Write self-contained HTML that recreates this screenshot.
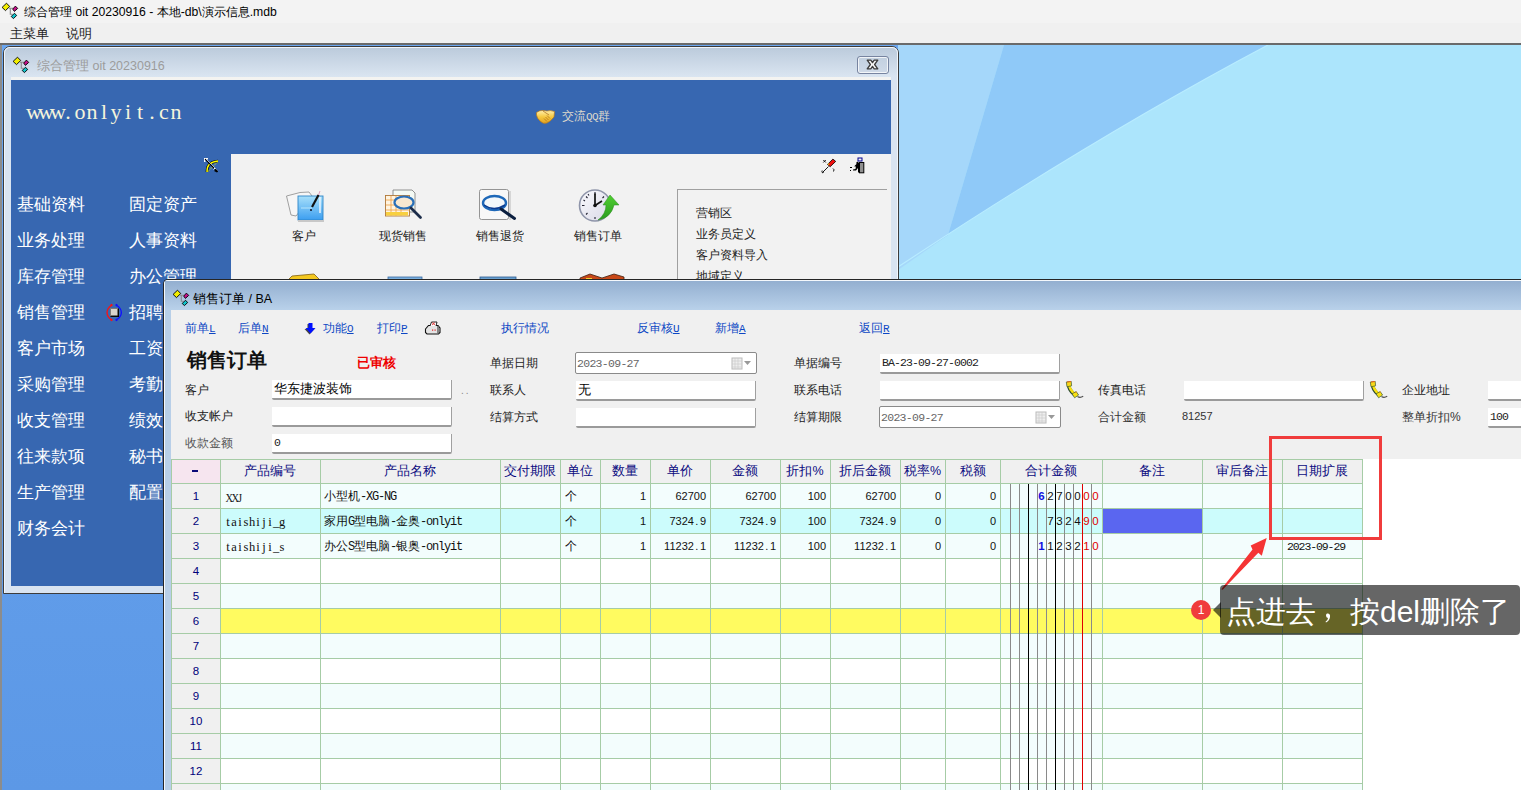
<!DOCTYPE html>
<html><head><meta charset="utf-8">
<style>
*{box-sizing:border-box;margin:0;padding:0}
html,body{width:1521px;height:790px;overflow:hidden;background:#fff}
body{position:relative;font-family:"Liberation Sans",sans-serif;font-size:12px;color:#000}
.a{position:absolute}
.t{position:absolute;white-space:nowrap;line-height:1}
/* desktop */
#desk{left:0;top:45px;width:1521px;height:745px;background:linear-gradient(180deg,#6aa6f0 0%,#5c98e6 100%)}
#deskR{left:898px;top:45px;width:623px;height:235px;background:#ace5fc;overflow:hidden}
/* window 1 */
#w1{left:3px;top:46px;width:896px;height:548px;border:1px solid #3c3c3c;border-radius:7px 7px 0 0;background:#d9e4f1}
#w1hi{left:4px;top:47px;width:894px;height:546px;border:1px solid #f2f6fb;border-bottom:0;border-radius:6px 6px 0 0}
#w1title{background:linear-gradient(180deg,#bccbdc,#dae5f1);border-radius:5px 5px 0 0}
#w1blue{left:11px;top:80px;width:880px;height:74px;background:#3767b1}
#w1blueL{left:11px;top:154px;width:220px;height:432px;background:#3767b1}
#w1content{left:231px;top:154px;width:660px;height:126px;background:#f2f2f2}
#w1strip{left:11px;top:77px;width:880px;height:3px;background:#f3f3f1}
/* window 2 */
#w2{left:163px;top:279px;width:1400px;height:520px;border:1px solid #262626;border-right:0;border-bottom:0;border-radius:5px 0 0 0;background:#b8cfe8}
#w2hi{left:164px;top:280px;width:1400px;height:520px;border:1px solid #f4f8fc;border-right:0;border-bottom:0;border-radius:4px 0 0 0}
#w2title{left:165px;top:281px;width:1356px;height:29px;background:linear-gradient(180deg,#93afd0,#b9d1ea)}
#w2content{left:171px;top:310px;width:1350px;height:149px;background:#f0f0f0}
#w2white{left:171px;top:459px;width:1350px;height:331px;background:#fff}
</style></head><body>
<!-- title bar -->
<div class="a" style="left:0;top:0;width:1521px;height:23px;background:#f3f3f3"></div>
<div class="a" style="left:0;top:23px;width:1521px;height:20px;background:#f0f0f0"></div>
<div class="a" style="left:0;top:43px;width:1521px;height:2px;background:#6a6a6a"></div>
<svg class="a" style="left:0px;top:0px" width="20" height="20" viewBox="0 0 20 20">
 <path d="M9 8.3 H13 M10.3 8.3 V14.3 H12.5" stroke="#8a8a8a" stroke-width="1.1" fill="none"/>
 <path d="M2.1 7.4 L6.5 3.2 L9.7 6.5 L5.5 10.6 Z" fill="#f2ee00" stroke="#000" stroke-width="0.9"/>
 <path d="M12.7 9.1 L15.4 6.1 L17.7 8.4 L14.4 11.4 Z" fill="#c8108a" stroke="#000" stroke-width="0.9"/>
 <path d="M11.2 16.5 L14.4 13.3 L16.7 15.4 L13.5 18.6 Z" fill="#10c4cc" stroke="#000" stroke-width="0.9"/>
</svg>
<div class="t" style="left:24px;top:6px;font-size:12.2px">综合管理 oit 20230916 - 本地-db\演示信息.mdb</div>
<div class="t" style="left:10px;top:27px;font-size:13px;color:#222">主菜单</div>
<div class="t" style="left:66px;top:27px;font-size:13px;color:#222">说明</div>

<div id="desk" class="a"></div>
<div id="deskR" class="a">
  <svg width="623" height="235" style="position:absolute;left:0;top:0">
    <polygon points="0,0 106,0 50,190 0,225" fill="#a5d7fa"/>
    <path d="M106,0 L370,0 Q200,90 0,222 L50,190 Z" fill="#8fc9f8"/>
    <path d="M370,0 Q200,90 0,222" stroke="#b8ecff" stroke-width="1.2" fill="none"/>
  </svg>
</div>

<div class="a" style="left:0;top:45px;width:2px;height:745px;background:#8c8c8c"></div>
<div id="w1" class="a"></div>
<div id="w1hi" class="a"></div>
<div id="w1title" class="a" style="left:5px;top:48px;width:892px;height:29px"></div>
<div id="w1strip" class="a"></div>
<div id="w1blue" class="a"></div>
<div id="w1blueL" class="a"></div>
<div id="w1content" class="a"></div>


<!-- W1 details -->
<svg class="a" style="left:11px;top:54px" width="20" height="20" viewBox="0 0 20 20">
 <path d="M9 8.3 H13 M10.3 8.3 V14.3 H12.5" stroke="#8a8a8a" stroke-width="1.1" fill="none"/>
 <path d="M2.1 7.4 L6.5 3.2 L9.7 6.5 L5.5 10.6 Z" fill="#f2ee00" stroke="#000" stroke-width="0.9"/>
 <path d="M12.7 9.1 L15.4 6.1 L17.7 8.4 L14.4 11.4 Z" fill="#c8108a" stroke="#000" stroke-width="0.9"/>
 <path d="M11.2 16.5 L14.4 13.3 L16.7 15.4 L13.5 18.6 Z" fill="#10c4cc" stroke="#000" stroke-width="0.9"/>
</svg>
<div class="t" style="left:37px;top:60px;font-size:12.5px;color:#9c9c9c">综合管理 oit 20230916</div>
<div class="a" style="left:857px;top:56px;width:32px;height:18px;border:1px solid #7784a0;border-radius:3px;background:linear-gradient(#c2d0e0,#cfdae8);box-shadow:inset 0 0 0 1px rgba(255,255,255,0.75)"></div>
<svg class="a" style="left:866px;top:59px" width="13" height="11" viewBox="0 0 13 11"><path d="M1.2 1.2 L4.8 1.2 L6.5 3.6 L8.2 1.2 L11.8 1.2 L8.6 5.5 L11.8 9.8 L8.2 9.8 L6.5 7.4 L4.8 9.8 L1.2 9.8 L4.4 5.5 Z" fill="#f6f6f6" stroke="#3c3c3c" stroke-width="1.3" stroke-linejoin="round"/></svg>
<div class="t" style="left:26px;top:101px;font-family:'Liberation Serif',serif;font-size:22px;color:#f4f4dc"><span style="display:inline-block;width:12px;text-align:center">w</span><span style="display:inline-block;width:12px;text-align:center">w</span><span style="display:inline-block;width:12px;text-align:center">w</span><span style="display:inline-block;width:12px;text-align:center">.</span><span style="display:inline-block;width:12px;text-align:center">o</span><span style="display:inline-block;width:12px;text-align:center">n</span><span style="display:inline-block;width:12px;text-align:center">l</span><span style="display:inline-block;width:12px;text-align:center">y</span><span style="display:inline-block;width:12px;text-align:center">i</span><span style="display:inline-block;width:12px;text-align:center">t</span><span style="display:inline-block;width:12px;text-align:center">.</span><span style="display:inline-block;width:12px;text-align:center">c</span><span style="display:inline-block;width:12px;text-align:center">n</span></div>
<svg class="a" style="left:536px;top:109px" width="20" height="16" viewBox="0 0 20 16">
 <defs><linearGradient id="hs" x1="0" y1="0" x2="0" y2="1"><stop offset="0" stop-color="#fff0b0"/><stop offset="0.5" stop-color="#f6c840"/><stop offset="1" stop-color="#e0a020"/></linearGradient></defs>
 <path d="M0.5 3.5 Q4 1 7 1.5 L11 2 Q14 1 18.5 2.5 L18 8 Q15 12 11 14 Q7 15.5 4 12 Q1 9.5 0.5 6 Z" fill="url(#hs)" stroke="#b87818" stroke-width="0.7"/>
 <path d="M7 2 Q10 4 13 6 M9.5 8 L12.5 11 M8 9.5 L11 12.5 M11 6.5 L14 9.5" stroke="#a86818" stroke-width="0.7" fill="none"/>
</svg>
<div class="t" style="left:562px;top:110px;font-size:12px;color:#dcd8cc">交流<span style="font-family:'Liberation Mono',monospace;font-size:11px;letter-spacing:-0.6px">QQ</span>群</div>
<svg class="a" style="left:203px;top:157px" width="16" height="16" viewBox="0 0 16 16">
 <path d="M4 15 Q3.5 5 15 4" stroke="#000" stroke-width="2.6" fill="none"/>
 <path d="M4 15 Q3.5 5 15 4" stroke="#ffff00" stroke-width="1.4" fill="none"/>
 <path d="M4.5 15 L15 4.5" stroke="#ffff00" stroke-width="0.9" stroke-dasharray="1 1"/>
 <path d="M1 1 H5 V2.5 H2.5 V5 H1 Z" fill="#fff"/>
 <path d="M2 2 L14.5 14.5" stroke="#000" stroke-width="1.1"/>
 <path d="M2.5 1.5 L14.5 13.5" stroke="#fff" stroke-width="0.6"/>
 <path d="M11 14 L13 12 L15 14.5 L14 15.5 Z" fill="#000"/>
 <path d="M10.5 12.5 L12 11" stroke="#fff" stroke-width="1"/>
</svg>
<div class="t" style="left:17px;top:196px;font-size:16.5px;color:#fff">基础资料</div>
<div class="t" style="left:17px;top:232px;font-size:16.5px;color:#fff">业务处理</div>
<div class="t" style="left:17px;top:268px;font-size:16.5px;color:#fff">库存管理</div>
<div class="t" style="left:17px;top:304px;font-size:16.5px;color:#fff">销售管理</div>
<div class="t" style="left:17px;top:340px;font-size:16.5px;color:#fff">客户市场</div>
<div class="t" style="left:17px;top:376px;font-size:16.5px;color:#fff">采购管理</div>
<div class="t" style="left:17px;top:412px;font-size:16.5px;color:#fff">收支管理</div>
<div class="t" style="left:17px;top:448px;font-size:16.5px;color:#fff">往来款项</div>
<div class="t" style="left:17px;top:484px;font-size:16.5px;color:#fff">生产管理</div>
<div class="t" style="left:17px;top:520px;font-size:16.5px;color:#fff">财务会计</div>
<div class="t" style="left:129px;top:196px;font-size:16.5px;color:#fff">固定资产</div>
<div class="t" style="left:129px;top:232px;font-size:16.5px;color:#fff">人事资料</div>
<div class="t" style="left:129px;top:268px;font-size:16.5px;color:#fff">办公管理</div>
<div class="t" style="left:129px;top:304px;font-size:16.5px;color:#fff">招聘</div>
<div class="t" style="left:129px;top:340px;font-size:16.5px;color:#fff">工资</div>
<div class="t" style="left:129px;top:376px;font-size:16.5px;color:#fff">考勤</div>
<div class="t" style="left:129px;top:412px;font-size:16.5px;color:#fff">绩效</div>
<div class="t" style="left:129px;top:448px;font-size:16.5px;color:#fff">秘书</div>
<div class="t" style="left:129px;top:484px;font-size:16.5px;color:#fff">配置</div>

<svg class="a" style="left:105px;top:303px" width="19" height="19" viewBox="0 0 19 19">
 <path d="M6.5 2.2 Q2.2 5 2 9.5 Q2.2 14 6.5 16.8" stroke="#ff1010" stroke-width="1.3" fill="none"/>
 <path d="M11.5 2.2 Q16.2 5 16.4 9.5 Q16.2 14 11.5 16.8" stroke="#1010ff" stroke-width="1.3" fill="none"/>
 <path d="M5 2 L6.5 0.8 L8 2 L6.5 3.4 Z M5 17 L6.5 15.6 L8 17 L6.5 18.2 Z" fill="#ff1010"/>
 <path d="M10 2 L11.5 0.8 L13 2 L11.5 3.4 Z M10 17 L11.5 15.6 L13 17 L11.5 18.2 Z" fill="#1010ff"/>
 <rect x="5.5" y="5.5" width="8.5" height="8.5" fill="#000"/>
 <rect x="5" y="5" width="8" height="8" fill="#7a7a7a"/>
 <rect x="6" y="6" width="7" height="7" fill="#d8d4cc"/>
 <path d="M6 13 H13 V6" stroke="#111" stroke-width="1" fill="none"/>
</svg>
<!-- W1 content icons -->
<svg class="a" style="left:230px;top:150px" width="420" height="140" viewBox="0 0 420 140">
 <defs>
  <linearGradient id="gb" x1="0" y1="0" x2="0" y2="1"><stop offset="0" stop-color="#a8e0fa"/><stop offset="1" stop-color="#3c9ef0"/></linearGradient>
  <linearGradient id="gc" x1="0" y1="0" x2="1" y2="1"><stop offset="0" stop-color="#fafafe"/><stop offset="1" stop-color="#d8d8e6"/></linearGradient>
  <linearGradient id="gg" x1="0" y1="0" x2="0" y2="1"><stop offset="0" stop-color="#50d030"/><stop offset="1" stop-color="#2a9a20"/></linearGradient>
 </defs>
 <!-- customer -->
 <path d="M56.5 46 L70 42.5 L79 42 L82 46 L66 66 L61 65 Z" fill="#f6f6f6" stroke="#8a8a8a" stroke-width="0.8"/>
 <rect x="68" y="46" width="25" height="24" fill="url(#gb)" stroke="#2f86c8" stroke-width="0.9"/>
 <path d="M71 58 H82" stroke="#c8f0ff" stroke-width="0.8"/>
 <path d="M90 47 V63" stroke="#e8f4ff" stroke-width="1.5"/>
 <rect x="68" y="70" width="26" height="2" fill="#c8c8c8"/>
 <path d="M82 57 L88.5 45" stroke="#111" stroke-width="2.2"/>
 <path d="M88.5 45 L90 41" stroke="#e0a0c0" stroke-width="1"/>
 <circle cx="81" cy="60" r="1" fill="#112"/>
 <!-- cash sale -->
 <path d="M163 40 H182 L185 43 V62 H163 Z" fill="#f4faf4" stroke="#777" stroke-width="0.8"/>
 <rect x="155.5" y="45.5" width="24" height="20.5" fill="#fff4e0" stroke="#b07838" stroke-width="0.9"/>
 <path d="M156 50 H179 M156 55 H179 M156 60 H179 M161 46 V66 M166 46 V66 M171 46 V66" stroke="#f0a040" stroke-width="0.8"/>
 <rect x="156" y="62" width="22" height="3.5" fill="#f8d040"/>
 <ellipse cx="174" cy="52.5" rx="9.5" ry="6" fill="#f8e8d0" stroke="#2a70b8" stroke-width="2.2"/>
 <path d="M181 58 L190.5 67.5" stroke="#1c2c4a" stroke-width="2.8" stroke-linecap="round"/>
 <!-- return -->
 <rect x="249.5" y="39.5" width="29" height="30" rx="2" fill="#f8f8f8" stroke="#8a8a8a" stroke-width="0.9"/>
 <rect x="279" y="41" width="2" height="29" fill="#d6d6d6"/>
 <ellipse cx="264.5" cy="53" rx="11.5" ry="7" fill="#f4f8fa" stroke="#1e68b8" stroke-width="2.4"/>
 <path d="M254 55 Q264 62 275 55" stroke="#0c3c90" stroke-width="1.5" fill="none"/>
 <path d="M271 59 L284.5 68.5" stroke="#0c2040" stroke-width="3" stroke-linecap="round"/>
 <!-- order clock -->
 <circle cx="365" cy="55.5" r="15.5" fill="url(#gc)" stroke="#8f95aa" stroke-width="1.6"/>
 <path d="M365 42 V44.5 M365 67 V69 M352 55.5 H354.5 M356 46.5 L357.5 48 M374 46.5 L372.5 48 M356 64.5 L357.5 63 M358 44 L359 45.5 M353.5 50 L355 51" stroke="#223" stroke-width="1.1"/>
 <path d="M365 55.5 V43.5 M365 55.5 L372 51" stroke="#111" stroke-width="1.7"/>
 <circle cx="365" cy="55.5" r="1.8" fill="#111"/>
 <path d="M373 55 H376 Q376 64 368 70 Q381 68 384 55 H389 L380 45 Z" fill="url(#gg)" stroke="#2a8a20" stroke-width="0.5"/>
 <!-- second row partial -->
 <path d="M56 132 L62 126 L84 124 L90 130 L90 133 L56 133 Z" fill="#f4c820" stroke="#806010" stroke-width="0.8"/>
 <rect x="158" y="127" width="34" height="6" fill="#7ab0e0" stroke="#3a6aa0" stroke-width="0.8"/>
 <rect x="250" y="127" width="36" height="6" fill="#6aa0d0" stroke="#2a5a90" stroke-width="0.8"/>
 <path d="M350 128 L360 124 L372 128 L384 124 L394 127 L394 133 L350 133 Z" fill="#c84818" stroke="#402010" stroke-width="0.8"/>
 <rect x="356" y="128" width="6" height="3" fill="#f0d030"/>
</svg>
<div class="t" style="left:292px;top:230px;font-size:12px;color:#222">客户</div>
<div class="t" style="left:379px;top:230px;font-size:12px;color:#222">现货销售</div>
<div class="t" style="left:476px;top:230px;font-size:12px;color:#222">销售退货</div>
<div class="t" style="left:574px;top:230px;font-size:12px;color:#222">销售订单</div>
<div class="a" style="left:677px;top:189px;width:210px;height:100px;border-left:1px solid #a0a0a0;border-top:1px solid #a0a0a0"></div>
<div class="t" style="left:696px;top:207px;font-size:12px;color:#222">营销区</div>
<div class="t" style="left:696px;top:228px;font-size:12px;color:#222">业务员定义</div>
<div class="t" style="left:696px;top:249px;font-size:12px;color:#222">客户资料导入</div>
<div class="t" style="left:696px;top:270px;font-size:12px;color:#222">地域定义</div>
<svg class="a" style="left:815px;top:150px" width="55" height="30" viewBox="0 0 55 30">
 <path d="M8.3 10 L10.8 12.5 M10.8 10 L8.3 12.5" stroke="#000" stroke-width="0.9"/>
 <path d="M7.5 22.5 L13.5 16.5" stroke="#000" stroke-width="0.9"/>
 <path d="M7.2 20.5 Q6.5 22 7.5 22.8 L9 21.8" stroke="#000" stroke-width="0.9" fill="none"/>
 <path d="M18 18.5 Q19.8 19.5 18.5 21.5" stroke="#000" stroke-width="0.9" fill="none"/>
 <path d="M12.5 14.4 L17.9 9.1 L20.7 11.4 L15.2 16.7 Z" fill="#f01010" stroke="#000" stroke-width="0.8"/>
 <rect x="13" y="13.5" width="1.2" height="1.2" fill="#f0f000"/>
 <rect x="43" y="8" width="4" height="3" fill="none" stroke="#000090" stroke-width="1"/>
 <rect x="44.5" y="12.5" width="4.3" height="10.3" fill="#909090" stroke="#000" stroke-width="1"/>
 <path d="M42 13 L44 13 L44 22.5 L43 22.5 L43 18 L41 20.5 L38 20.5 L38 19.5 L40.5 19 L41 16 L40 17 L39.5 16 L42 13.5 Z" fill="#000"/>
 <circle cx="42.5" cy="13" r="1.2" fill="#000"/>
 <rect x="35" y="17" width="2" height="1" fill="#000"/><rect x="35" y="20" width="1" height="1" fill="#000"/>
</svg>

<div id="w2" class="a"></div>
<div id="w2hi" class="a"></div>
<div id="w2title" class="a"></div>
<div id="w2content" class="a"></div>
<div id="w2white" class="a"></div>

<svg class="a" style="left:171px;top:287px" width="20" height="20" viewBox="0 0 20 20">
 <path d="M9 8.3 H13 M10.3 8.3 V14.3 H12.5" stroke="#8a8a8a" stroke-width="1.1" fill="none"/>
 <path d="M2.1 7.4 L6.5 3.2 L9.7 6.5 L5.5 10.6 Z" fill="#f2ee00" stroke="#000" stroke-width="0.9"/>
 <path d="M12.7 9.1 L15.4 6.1 L17.7 8.4 L14.4 11.4 Z" fill="#c8108a" stroke="#000" stroke-width="0.9"/>
 <path d="M11.2 16.5 L14.4 13.3 L16.7 15.4 L13.5 18.6 Z" fill="#10c4cc" stroke="#000" stroke-width="0.9"/>
</svg>
<div class="t" style="left:193px;top:293px;font-size:12.5px;color:#000">销售订单 / BA</div>
<!-- toolbar -->
<div class="t" style="left:185px;top:322px;font-size:12px;color:#0d47c4">前单<u style="font-family:'Liberation Mono',monospace;font-size:11px">L</u></div>
<div class="t" style="left:238px;top:322px;font-size:12px;color:#0d47c4">后单<u style="font-family:'Liberation Mono',monospace;font-size:11px">N</u></div>
<svg class="a" style="left:304px;top:322px" width="12" height="13" viewBox="0 0 12 13"><path d="M3.5 2 H7.5 V7 H10.5 L5.5 12.5 L0.5 7 H3.5 Z" fill="#444"/><path d="M4.5 1 H8.5 V6 H11.5 L6.5 11.5 L1.5 6 H4.5 Z" fill="#0010ff"/></svg>
<div class="t" style="left:323px;top:322px;font-size:12px;color:#0d47c4">功能<u style="font-family:'Liberation Mono',monospace;font-size:11px">O</u></div>
<div class="t" style="left:377px;top:322px;font-size:12px;color:#0d47c4">打印<u style="font-family:'Liberation Mono',monospace;font-size:11px">P</u></div>
<svg class="a" style="left:424px;top:321px" width="17" height="14" viewBox="0 0 17 14">
 <path d="M1.5 8 L4.5 4.5 H14 L16 7 V11.5 L14.5 13 H3 L1.5 11.5 Z" fill="#e4e4e4" stroke="#111" stroke-width="1.1"/>
 <path d="M14 5 V12.5" stroke="#666" stroke-width="1.5"/>
 <path d="M6 5 L7.5 1 H13 L12 5" fill="#fff" stroke="#111" stroke-width="0.9"/>
 <path d="M8 1.5 L11 4 M11 1.5 L8 4" stroke="#e02020" stroke-width="0.8"/>
 <rect x="8" y="8.5" width="1.2" height="1.2" fill="#e02020"/><rect x="10.5" y="8.5" width="1.2" height="1.2" fill="#e02020"/>
</svg>
<div class="t" style="left:501px;top:322px;font-size:12px;color:#0d47c4">执行情况</div>
<div class="t" style="left:637px;top:322px;font-size:12px;color:#0d47c4">反审核<u style="font-family:'Liberation Mono',monospace;font-size:11px">U</u></div>
<div class="t" style="left:715px;top:322px;font-size:12px;color:#0d47c4">新增<u style="font-family:'Liberation Mono',monospace;font-size:11px">A</u></div>
<div class="t" style="left:859px;top:322px;font-size:12px;color:#0d47c4">返回<u style="font-family:'Liberation Mono',monospace;font-size:11px">R</u></div>
<!-- form -->
<div class="t" style="left:187px;top:350px;font-family:'Liberation Serif',serif;font-size:20px;font-weight:bold;color:#111">销售订单</div>
<div class="t" style="left:357px;top:357px;font-size:12.5px;font-weight:bold;color:#ee0000">已审核</div>
<div class="t" style="left:185px;top:384px;font-size:12px;color:#222">客户</div>
<div class="t" style="left:185px;top:410px;font-size:12px;color:#222">收支帐户</div>
<div class="t" style="left:185px;top:437px;font-size:12px;color:#555">收款金额</div>
<div class="t" style="left:490px;top:357px;font-size:12px;color:#222">单据日期</div>
<div class="t" style="left:490px;top:384px;font-size:12px;color:#222">联系人</div>
<div class="t" style="left:490px;top:411px;font-size:12px;color:#222">结算方式</div>
<div class="t" style="left:794px;top:357px;font-size:12px;color:#222">单据编号</div>
<div class="t" style="left:794px;top:384px;font-size:12px;color:#222">联系电话</div>
<div class="t" style="left:794px;top:411px;font-size:12px;color:#222">结算期限</div>
<div class="t" style="left:1098px;top:384px;font-size:12px;color:#222">传真电话</div>
<div class="t" style="left:1098px;top:411px;font-size:12px;color:#333">合计金额</div>
<div class="t" style="left:1402px;top:384px;font-size:12px;color:#222">企业地址</div>
<div class="t" style="left:1402px;top:411px;font-size:12px;color:#333">整单折扣%</div>
<div class="a" style="left:272px;top:380px;width:180px;height:20px;background:#fff;border-right:1px solid #a0a0a0;border-bottom:2px solid #9a9a9a;border-radius:0 0 2px 2px"><div class="t" style="left:2px;font-size:12.5px;top:3px">华东捷波装饰</div></div>
<div class="a" style="left:272px;top:407px;width:180px;height:20px;background:#fff;border-right:1px solid #a0a0a0;border-bottom:2px solid #9a9a9a;border-radius:0 0 2px 2px"><div class="t" style="left:2px;font-size:12.5px;top:3px"></div></div>
<div class="a" style="left:272px;top:434px;width:180px;height:20px;background:#fff;border-right:1px solid #a0a0a0;border-bottom:2px solid #9a9a9a;border-radius:0 0 2px 2px"><div class="t" style="left:2px;font-family:'Liberation Mono',monospace;font-size:11.5px;letter-spacing:-0.9px;top:3px;color:#222">0</div></div>
<div class="a" style="left:576px;top:381px;width:180px;height:20px;background:#fff;border-right:1px solid #a0a0a0;border-bottom:2px solid #9a9a9a;border-radius:0 0 2px 2px"><div class="t" style="left:2px;font-size:12.5px;top:3px">无</div></div>
<div class="a" style="left:576px;top:408px;width:180px;height:20px;background:#fff;border-right:1px solid #a0a0a0;border-bottom:2px solid #9a9a9a;border-radius:0 0 2px 2px"><div class="t" style="left:2px;font-size:12.5px;top:3px"></div></div>
<div class="a" style="left:880px;top:354px;width:180px;height:20px;background:#fff;border-right:1px solid #a0a0a0;border-bottom:2px solid #9a9a9a;border-radius:0 0 2px 2px"><div class="t" style="left:2px;font-family:'Liberation Mono',monospace;font-size:11.5px;letter-spacing:-0.9px;top:3px;color:#222">BA-23-09-27-0002</div></div>
<div class="a" style="left:880px;top:381px;width:180px;height:20px;background:#fff;border-right:1px solid #a0a0a0;border-bottom:2px solid #9a9a9a;border-radius:0 0 2px 2px"><div class="t" style="left:2px;font-size:12.5px;top:3px"></div></div>
<div class="a" style="left:1184px;top:381px;width:180px;height:20px;background:#fff;border-right:1px solid #a0a0a0;border-bottom:2px solid #9a9a9a;border-radius:0 0 2px 2px"><div class="t" style="left:2px;font-size:12.5px;top:3px"></div></div>
<div class="a" style="left:1488px;top:381px;width:40px;height:20px;background:#fff;border-right:1px solid #a0a0a0;border-bottom:2px solid #9a9a9a;border-radius:0 0 2px 2px"><div class="t" style="left:2px;font-size:12.5px;top:3px"></div></div>
<div class="a" style="left:1488px;top:408px;width:40px;height:20px;background:#fff;border-right:1px solid #a0a0a0;border-bottom:2px solid #9a9a9a;border-radius:0 0 2px 2px"><div class="t" style="left:2px;font-family:'Liberation Mono',monospace;font-size:11.5px;letter-spacing:-0.9px;top:3px;color:#222">100</div></div>
<div class="a" style="left:575px;top:352px;width:182px;height:22px;background:#fff;border:1px solid #8a8a8a;border-radius:2px">
<div class="t" style="left:1px;top:5px;font-family:'Liberation Mono',monospace;font-size:11.5px;letter-spacing:-0.7px;color:#666">2023-09-27</div>
<svg class="a" style="left:155px;top:4px" width="22" height="13" viewBox="0 0 22 13"><rect x="1" y="1" width="10" height="11" fill="#eee" stroke="#bbb"/><path d="M1 4 H11 M1 7 H11 M1 10 H11 M4 1 V12 M7 1 V12" stroke="#ccc" stroke-width="0.7"/><path d="M13 4 L20 4 L16.5 8 Z" fill="#999"/></svg></div>
<div class="a" style="left:879px;top:406px;width:182px;height:22px;background:#fff;border:1px solid #8a8a8a;border-radius:2px">
<div class="t" style="left:1px;top:5px;font-family:'Liberation Mono',monospace;font-size:11.5px;letter-spacing:-0.7px;color:#666">2023-09-27</div>
<svg class="a" style="left:155px;top:4px" width="22" height="13" viewBox="0 0 22 13"><rect x="1" y="1" width="10" height="11" fill="#eee" stroke="#bbb"/><path d="M1 4 H11 M1 7 H11 M1 10 H11 M4 1 V12 M7 1 V12" stroke="#ccc" stroke-width="0.7"/><path d="M13 4 L20 4 L16.5 8 Z" fill="#999"/></svg></div>
<div class="t" style="left:1182px;top:411px;font-family:'Liberation Sans',sans-serif;font-size:11px;color:#333">81257</div>
<div class="t" style="left:461px;top:386px;font-size:10px;color:#888;letter-spacing:2px">..</div>
<svg class="a" style="left:1065px;top:381px" width="19" height="18" viewBox="0 0 19 18">
 <path d="M12.5 15.5 Q15 17.2 18.2 15.3" stroke="#505050" stroke-width="1.3" fill="none"/>
 <path d="M3.6 3.5 Q3.4 8.5 9.8 14" stroke="#2a4a30" stroke-width="3.6" fill="none"/>
 <path d="M4.2 3.5 Q4.2 8.2 10.2 13.5" stroke="#f8e010" stroke-width="2.6" fill="none"/>
 <path d="M1.3 1 L6.2 0.3 L6.6 4.8 L2 5.8 Z" fill="#f8d818" stroke="#3a5a30" stroke-width="0.7"/>
 <path d="M2 1 L6 0.5" stroke="#f06020" stroke-width="0.9"/>
 <path d="M7 12.8 L11.2 10.6 L13.6 14 L9.6 16.8 Z" fill="#f8e010" stroke="#3a5a30" stroke-width="0.7"/>
 <path d="M10 11.5 L12 11" stroke="#e08020" stroke-width="0.8"/>
</svg><svg class="a" style="left:1369px;top:381px" width="19" height="18" viewBox="0 0 19 18">
 <path d="M12.5 15.5 Q15 17.2 18.2 15.3" stroke="#505050" stroke-width="1.3" fill="none"/>
 <path d="M3.6 3.5 Q3.4 8.5 9.8 14" stroke="#2a4a30" stroke-width="3.6" fill="none"/>
 <path d="M4.2 3.5 Q4.2 8.2 10.2 13.5" stroke="#f8e010" stroke-width="2.6" fill="none"/>
 <path d="M1.3 1 L6.2 0.3 L6.6 4.8 L2 5.8 Z" fill="#f8d818" stroke="#3a5a30" stroke-width="0.7"/>
 <path d="M2 1 L6 0.5" stroke="#f06020" stroke-width="0.9"/>
 <path d="M7 12.8 L11.2 10.6 L13.6 14 L9.6 16.8 Z" fill="#f8e010" stroke="#3a5a30" stroke-width="0.7"/>
 <path d="M10 11.5 L12 11" stroke="#e08020" stroke-width="0.8"/>
</svg>
<!-- grid -->
<div class="a" style="left:171px;top:459px;width:1192px;height:25px;background:#f0f0f0"></div>
<div class="a" style="left:172px;top:460px;width:48px;height:23px;background:#f6e5ef"></div>
<div class="a" style="left:220px;top:484px;width:1142px;height:24px;background:#f3fdfd"></div>
<div class="a" style="left:172px;top:484px;width:48px;height:24px;background:#f0f0f0"></div>
<div class="a" style="left:220px;top:509px;width:1142px;height:24px;background:#ccfcfc"></div>
<div class="a" style="left:172px;top:509px;width:48px;height:24px;background:#f0f0f0"></div>
<div class="a" style="left:220px;top:534px;width:1142px;height:24px;background:#f3fdfd"></div>
<div class="a" style="left:172px;top:534px;width:48px;height:24px;background:#f0f0f0"></div>
<div class="a" style="left:220px;top:559px;width:1142px;height:24px;background:#ffffff"></div>
<div class="a" style="left:172px;top:559px;width:48px;height:24px;background:#f0f0f0"></div>
<div class="a" style="left:220px;top:584px;width:1142px;height:24px;background:#f3fdfd"></div>
<div class="a" style="left:172px;top:584px;width:48px;height:24px;background:#f0f0f0"></div>
<div class="a" style="left:220px;top:609px;width:1142px;height:24px;background:#fffb60"></div>
<div class="a" style="left:172px;top:609px;width:48px;height:24px;background:#f0f0f0"></div>
<div class="a" style="left:220px;top:634px;width:1142px;height:24px;background:#f3fdfd"></div>
<div class="a" style="left:172px;top:634px;width:48px;height:24px;background:#f0f0f0"></div>
<div class="a" style="left:220px;top:659px;width:1142px;height:24px;background:#ffffff"></div>
<div class="a" style="left:172px;top:659px;width:48px;height:24px;background:#f0f0f0"></div>
<div class="a" style="left:220px;top:684px;width:1142px;height:24px;background:#f3fdfd"></div>
<div class="a" style="left:172px;top:684px;width:48px;height:24px;background:#f0f0f0"></div>
<div class="a" style="left:220px;top:709px;width:1142px;height:24px;background:#ffffff"></div>
<div class="a" style="left:172px;top:709px;width:48px;height:24px;background:#f0f0f0"></div>
<div class="a" style="left:220px;top:734px;width:1142px;height:24px;background:#f3fdfd"></div>
<div class="a" style="left:172px;top:734px;width:48px;height:24px;background:#f0f0f0"></div>
<div class="a" style="left:220px;top:759px;width:1142px;height:24px;background:#ffffff"></div>
<div class="a" style="left:172px;top:759px;width:48px;height:24px;background:#f0f0f0"></div>
<div class="a" style="left:220px;top:784px;width:1142px;height:24px;background:#f3fdfd"></div>
<div class="a" style="left:172px;top:784px;width:48px;height:24px;background:#f0f0f0"></div>
<div class="a" style="left:1103px;top:509px;width:99px;height:24px;background:#5a66f0"></div>
<svg class="a" style="left:0;top:0" width="1521" height="790"><rect x="220" y="459" width="1" height="331" fill="#a6cca6"/><rect x="320" y="459" width="1" height="331" fill="#a6cca6"/><rect x="500" y="459" width="1" height="331" fill="#a6cca6"/><rect x="560" y="459" width="1" height="331" fill="#a6cca6"/><rect x="600" y="459" width="1" height="331" fill="#a6cca6"/><rect x="650" y="459" width="1" height="331" fill="#a6cca6"/><rect x="710" y="459" width="1" height="331" fill="#a6cca6"/><rect x="780" y="459" width="1" height="331" fill="#a6cca6"/><rect x="830" y="459" width="1" height="331" fill="#a6cca6"/><rect x="900" y="459" width="1" height="331" fill="#a6cca6"/><rect x="945" y="459" width="1" height="331" fill="#a6cca6"/><rect x="1000" y="459" width="1" height="331" fill="#a6cca6"/><rect x="1102" y="459" width="1" height="331" fill="#a6cca6"/><rect x="1202" y="459" width="1" height="331" fill="#a6cca6"/><rect x="1282" y="459" width="1" height="331" fill="#a6cca6"/><rect x="1362" y="459" width="1" height="331" fill="#a6cca6"/><rect x="171" y="459" width="1" height="331" fill="#a6cca6"/><rect x="171" y="483" width="1192" height="1" fill="#a6cca6"/><rect x="171" y="508" width="1192" height="1" fill="#a6cca6"/><rect x="171" y="533" width="1192" height="1" fill="#a6cca6"/><rect x="171" y="558" width="1192" height="1" fill="#a6cca6"/><rect x="171" y="583" width="1192" height="1" fill="#a6cca6"/><rect x="171" y="608" width="1192" height="1" fill="#a6cca6"/><rect x="171" y="633" width="1192" height="1" fill="#a6cca6"/><rect x="171" y="658" width="1192" height="1" fill="#a6cca6"/><rect x="171" y="683" width="1192" height="1" fill="#a6cca6"/><rect x="171" y="708" width="1192" height="1" fill="#a6cca6"/><rect x="171" y="733" width="1192" height="1" fill="#a6cca6"/><rect x="171" y="758" width="1192" height="1" fill="#a6cca6"/><rect x="171" y="783" width="1192" height="1" fill="#a6cca6"/><rect x="171" y="808" width="1192" height="1" fill="#a6cca6"/><rect x="171" y="459" width="1192" height="1" fill="#a6cca6"/><rect x="1010" y="484" width="1" height="306" fill="#8a8a8a"/><rect x="1019" y="484" width="1" height="306" fill="#8a8a8a"/><rect x="1028" y="484" width="1" height="306" fill="#000"/><rect x="1037" y="484" width="1" height="306" fill="#8a8a8a"/><rect x="1046" y="484" width="1" height="306" fill="#8a8a8a"/><rect x="1055" y="484" width="1" height="306" fill="#000"/><rect x="1064" y="484" width="1" height="306" fill="#8a8a8a"/><rect x="1073" y="484" width="1" height="306" fill="#8a8a8a"/><rect x="1082" y="484" width="1" height="306" fill="#e00000"/><rect x="1091" y="484" width="1" height="306" fill="#8a8a8a"/></svg>
<div class="a" style="left:192px;top:470px;width:6px;height:2px;background:#0a0a78"></div>
<div class="t" style="left:220px;top:465px;width:100px;text-align:center;font-size:12.5px;color:#0a0a80">产品编号</div>
<div class="t" style="left:320px;top:465px;width:180px;text-align:center;font-size:12.5px;color:#0a0a80">产品名称</div>
<div class="t" style="left:500px;top:465px;width:60px;text-align:center;font-size:12.5px;color:#0a0a80">交付期限</div>
<div class="t" style="left:560px;top:465px;width:40px;text-align:center;font-size:12.5px;color:#0a0a80">单位</div>
<div class="t" style="left:600px;top:465px;width:50px;text-align:center;font-size:12.5px;color:#0a0a80">数量</div>
<div class="t" style="left:650px;top:465px;width:60px;text-align:center;font-size:12.5px;color:#0a0a80">单价</div>
<div class="t" style="left:710px;top:465px;width:70px;text-align:center;font-size:12.5px;color:#0a0a80">金额</div>
<div class="t" style="left:780px;top:465px;width:50px;text-align:center;font-size:12.5px;color:#0a0a80">折扣%</div>
<div class="t" style="left:830px;top:465px;width:70px;text-align:center;font-size:12.5px;color:#0a0a80">折后金额</div>
<div class="t" style="left:900px;top:465px;width:45px;text-align:center;font-size:12.5px;color:#0a0a80">税率%</div>
<div class="t" style="left:945px;top:465px;width:55px;text-align:center;font-size:12.5px;color:#0a0a80">税额</div>
<div class="t" style="left:1000px;top:465px;width:102px;text-align:center;font-size:12.5px;color:#0a0a80">合计金额</div>
<div class="t" style="left:1102px;top:465px;width:100px;text-align:center;font-size:12.5px;color:#0a0a80">备注</div>
<div class="t" style="left:1202px;top:465px;width:80px;text-align:center;font-size:12.5px;color:#0a0a80">审后备注</div>
<div class="t" style="left:1282px;top:465px;width:80px;text-align:center;font-size:12.5px;color:#0a0a80">日期扩展</div>
<div class="t" style="left:172px;top:491px;width:48px;text-align:center;font-size:11.5px;color:#00007a">1</div>
<div class="t" style="left:172px;top:516px;width:48px;text-align:center;font-size:11.5px;color:#00007a">2</div>
<div class="t" style="left:172px;top:541px;width:48px;text-align:center;font-size:11.5px;color:#00007a">3</div>
<div class="t" style="left:172px;top:566px;width:48px;text-align:center;font-size:11.5px;color:#00007a">4</div>
<div class="t" style="left:172px;top:591px;width:48px;text-align:center;font-size:11.5px;color:#00007a">5</div>
<div class="t" style="left:172px;top:616px;width:48px;text-align:center;font-size:11.5px;color:#00007a">6</div>
<div class="t" style="left:172px;top:641px;width:48px;text-align:center;font-size:11.5px;color:#00007a">7</div>
<div class="t" style="left:172px;top:666px;width:48px;text-align:center;font-size:11.5px;color:#00007a">8</div>
<div class="t" style="left:172px;top:691px;width:48px;text-align:center;font-size:11.5px;color:#00007a">9</div>
<div class="t" style="left:172px;top:716px;width:48px;text-align:center;font-size:11.5px;color:#00007a">10</div>
<div class="t" style="left:172px;top:741px;width:48px;text-align:center;font-size:11.5px;color:#00007a">11</div>
<div class="t" style="left:172px;top:766px;width:48px;text-align:center;font-size:11.5px;color:#00007a">12</div>
<div class="t" style="left:225px;top:491px;font-family:'Liberation Serif',serif;font-size:12.5px;color:#111"><span style="display:inline-block;width:6px;text-align:center;transform:scaleX(0.8);font-size:13px">X</span><span style="display:inline-block;width:6px;text-align:center;transform:scaleX(0.8);font-size:13px">X</span><span style="display:inline-block;width:6px;text-align:center;transform:scaleX(0.8);font-size:13px">J</span></div>
<div class="t" style="left:324px;top:490px;font-size:12px;color:#111">小型机<span style="font-family:'Liberation Mono',monospace;letter-spacing:-1.2px">-XG-NG</span></div>
<div class="t" style="left:565px;top:490px;font-size:12px;color:#111">个</div>
<div class="t" style="left:550px;top:491px;width:96px;text-align:right;font-family:'Liberation Sans',sans-serif;font-size:11px;color:#111">1</div>
<div class="t" style="left:610px;top:491px;width:96px;text-align:right;font-family:'Liberation Sans',sans-serif;font-size:11px;color:#111">62700</div>
<div class="t" style="left:680px;top:491px;width:96px;text-align:right;font-family:'Liberation Sans',sans-serif;font-size:11px;color:#111">62700</div>
<div class="t" style="left:730px;top:491px;width:96px;text-align:right;font-family:'Liberation Sans',sans-serif;font-size:11px;color:#111">100</div>
<div class="t" style="left:800px;top:491px;width:96px;text-align:right;font-family:'Liberation Sans',sans-serif;font-size:11px;color:#111">62700</div>
<div class="t" style="left:845px;top:491px;width:96px;text-align:right;font-family:'Liberation Sans',sans-serif;font-size:11px;color:#111">0</div>
<div class="t" style="left:900px;top:491px;width:96px;text-align:right;font-family:'Liberation Sans',sans-serif;font-size:11px;color:#111">0</div>
<div class="t" style="left:225px;top:516px;font-family:'Liberation Serif',serif;font-size:12.5px;color:#111"><span style="display:inline-block;width:6px;text-align:center">t</span><span style="display:inline-block;width:6px;text-align:center">a</span><span style="display:inline-block;width:6px;text-align:center">i</span><span style="display:inline-block;width:6px;text-align:center">s</span><span style="display:inline-block;width:6px;text-align:center">h</span><span style="display:inline-block;width:6px;text-align:center">i</span><span style="display:inline-block;width:6px;text-align:center">j</span><span style="display:inline-block;width:6px;text-align:center">i</span><span style="display:inline-block;width:6px;text-align:center">_</span><span style="display:inline-block;width:6px;text-align:center">g</span></div>
<div class="t" style="left:324px;top:515px;font-size:12px;color:#111">家用<span style="font-family:'Liberation Mono',monospace;letter-spacing:-1.2px">G</span>型电脑<span style="font-family:'Liberation Mono',monospace;letter-spacing:-1.2px">-</span>金奥<span style="font-family:'Liberation Mono',monospace;letter-spacing:-1.2px">-onlyit</span></div>
<div class="t" style="left:565px;top:515px;font-size:12px;color:#111">个</div>
<div class="t" style="left:550px;top:516px;width:96px;text-align:right;font-family:'Liberation Sans',sans-serif;font-size:11px;color:#111">1</div>
<div class="t" style="left:610px;top:516px;width:96px;text-align:right;font-family:'Liberation Sans',sans-serif;font-size:11px;color:#111">7324<span style="display:inline-block;width:6px;text-align:center">.</span>9</div>
<div class="t" style="left:680px;top:516px;width:96px;text-align:right;font-family:'Liberation Sans',sans-serif;font-size:11px;color:#111">7324<span style="display:inline-block;width:6px;text-align:center">.</span>9</div>
<div class="t" style="left:730px;top:516px;width:96px;text-align:right;font-family:'Liberation Sans',sans-serif;font-size:11px;color:#111">100</div>
<div class="t" style="left:800px;top:516px;width:96px;text-align:right;font-family:'Liberation Sans',sans-serif;font-size:11px;color:#111">7324<span style="display:inline-block;width:6px;text-align:center">.</span>9</div>
<div class="t" style="left:845px;top:516px;width:96px;text-align:right;font-family:'Liberation Sans',sans-serif;font-size:11px;color:#111">0</div>
<div class="t" style="left:900px;top:516px;width:96px;text-align:right;font-family:'Liberation Sans',sans-serif;font-size:11px;color:#111">0</div>
<div class="t" style="left:225px;top:541px;font-family:'Liberation Serif',serif;font-size:12.5px;color:#111"><span style="display:inline-block;width:6px;text-align:center">t</span><span style="display:inline-block;width:6px;text-align:center">a</span><span style="display:inline-block;width:6px;text-align:center">i</span><span style="display:inline-block;width:6px;text-align:center">s</span><span style="display:inline-block;width:6px;text-align:center">h</span><span style="display:inline-block;width:6px;text-align:center">i</span><span style="display:inline-block;width:6px;text-align:center">j</span><span style="display:inline-block;width:6px;text-align:center">i</span><span style="display:inline-block;width:6px;text-align:center">_</span><span style="display:inline-block;width:6px;text-align:center">s</span></div>
<div class="t" style="left:324px;top:540px;font-size:12px;color:#111">办公<span style="font-family:'Liberation Mono',monospace;letter-spacing:-1.2px">S</span>型电脑<span style="font-family:'Liberation Mono',monospace;letter-spacing:-1.2px">-</span>银奥<span style="font-family:'Liberation Mono',monospace;letter-spacing:-1.2px">-onlyit</span></div>
<div class="t" style="left:565px;top:540px;font-size:12px;color:#111">个</div>
<div class="t" style="left:550px;top:541px;width:96px;text-align:right;font-family:'Liberation Sans',sans-serif;font-size:11px;color:#111">1</div>
<div class="t" style="left:610px;top:541px;width:96px;text-align:right;font-family:'Liberation Sans',sans-serif;font-size:11px;color:#111">11232<span style="display:inline-block;width:6px;text-align:center">.</span>1</div>
<div class="t" style="left:680px;top:541px;width:96px;text-align:right;font-family:'Liberation Sans',sans-serif;font-size:11px;color:#111">11232<span style="display:inline-block;width:6px;text-align:center">.</span>1</div>
<div class="t" style="left:730px;top:541px;width:96px;text-align:right;font-family:'Liberation Sans',sans-serif;font-size:11px;color:#111">100</div>
<div class="t" style="left:800px;top:541px;width:96px;text-align:right;font-family:'Liberation Sans',sans-serif;font-size:11px;color:#111">11232<span style="display:inline-block;width:6px;text-align:center">.</span>1</div>
<div class="t" style="left:845px;top:541px;width:96px;text-align:right;font-family:'Liberation Sans',sans-serif;font-size:11px;color:#111">0</div>
<div class="t" style="left:900px;top:541px;width:96px;text-align:right;font-family:'Liberation Sans',sans-serif;font-size:11px;color:#111">0</div>
<div class="t" style="left:1037px;top:491px;width:9px;text-align:center;font-size:11.5px;color:#1010e0;font-weight:bold">6</div>
<div class="t" style="left:1046px;top:491px;width:9px;text-align:center;font-size:11.5px;color:#111">2</div>
<div class="t" style="left:1055px;top:491px;width:9px;text-align:center;font-size:11.5px;color:#111">7</div>
<div class="t" style="left:1064px;top:491px;width:9px;text-align:center;font-size:11.5px;color:#111">0</div>
<div class="t" style="left:1073px;top:491px;width:9px;text-align:center;font-size:11.5px;color:#111">0</div>
<div class="t" style="left:1082px;top:491px;width:9px;text-align:center;font-size:11.5px;color:#e00000">0</div>
<div class="t" style="left:1091px;top:491px;width:9px;text-align:center;font-size:11.5px;color:#e00000">0</div>
<div class="t" style="left:1046px;top:516px;width:9px;text-align:center;font-size:11.5px;color:#111">7</div>
<div class="t" style="left:1055px;top:516px;width:9px;text-align:center;font-size:11.5px;color:#111">3</div>
<div class="t" style="left:1064px;top:516px;width:9px;text-align:center;font-size:11.5px;color:#111">2</div>
<div class="t" style="left:1073px;top:516px;width:9px;text-align:center;font-size:11.5px;color:#111">4</div>
<div class="t" style="left:1082px;top:516px;width:9px;text-align:center;font-size:11.5px;color:#e00000">9</div>
<div class="t" style="left:1091px;top:516px;width:9px;text-align:center;font-size:11.5px;color:#e00000">0</div>
<div class="t" style="left:1037px;top:541px;width:9px;text-align:center;font-size:11.5px;color:#1010e0;font-weight:bold">1</div>
<div class="t" style="left:1046px;top:541px;width:9px;text-align:center;font-size:11.5px;color:#111">1</div>
<div class="t" style="left:1055px;top:541px;width:9px;text-align:center;font-size:11.5px;color:#111">2</div>
<div class="t" style="left:1064px;top:541px;width:9px;text-align:center;font-size:11.5px;color:#111">3</div>
<div class="t" style="left:1073px;top:541px;width:9px;text-align:center;font-size:11.5px;color:#111">2</div>
<div class="t" style="left:1082px;top:541px;width:9px;text-align:center;font-size:11.5px;color:#e00000">1</div>
<div class="t" style="left:1091px;top:541px;width:9px;text-align:center;font-size:11.5px;color:#e00000">0</div>
<div class="t" style="left:1287px;top:541px;font-family:'Liberation Mono',monospace;font-size:12px;letter-spacing:-1.2px;font-size:11.5px;letter-spacing:-1.1px;color:#111">2023-09-29</div>


<!-- annotation -->
<div class="a" style="left:1269px;top:436px;width:113px;height:104px;border:3px solid #f03c3c"></div>
<svg class="a" style="left:1210px;top:530px" width="70" height="70" viewBox="0 0 70 70">
 <path d="M11.3 59.2 L42.5 19.5 L40.7 15.5 L56.7 8 L51.8 25.7 L48.3 22.8 L12.7 59.8 Z" fill="#f53434"/>
</svg>
<div class="a" style="left:1220px;top:585px;width:300px;height:50px;border-radius:4px;background:rgba(0,0,0,0.6)"></div>
<svg class="a" style="left:1212px;top:602px" width="9" height="16"><path d="M9 0 L1 8 L9 16 Z" fill="rgba(0,0,0,0.6)"/></svg>
<div class="t" style="left:1226px;top:597px;font-size:30px;color:#fff">点进去</div>
<svg class="a" style="left:1324px;top:612px" width="10" height="12" viewBox="0 0 10 12"><path d="M3 1.5 Q6.5 1 6 5 Q5.5 8.5 2 10.5 L1.5 9.8 Q4 8 4 6 Q2 5.5 2 3.5 Q2 1.8 3 1.5 Z" fill="#fff"/></svg>
<div class="t" style="left:1350px;top:597px;font-size:30px;color:#fff">按del删除了</div>
<div class="a" style="left:1191px;top:600px;width:20px;height:20px;border-radius:50%;background:#f03c3c"></div>
<div class="t" style="left:1191px;top:604px;width:20px;text-align:center;font-size:12px;color:#fff">1</div>

</body></html>
